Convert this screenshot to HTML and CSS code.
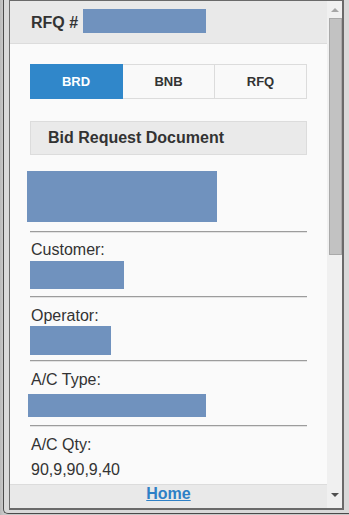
FILE: index.html
```html
<!DOCTYPE html>
<html>
<head>
    <meta charset="UTF-8">
    <title>RFQ</title>
    <link rel="stylesheet" href="styles.css">
</head>
<body>
    <div class="window">
        <div class="frame">
            <div class="page">
                <header>
                    <h2>RFQ #</h2>
                    <span class="hide hide-rfq"></span>
                </header>
                <div class="content">
                    <div class="tabs">
                        <button class="tab active">BRD</button>
                        <button class="tab">BNB</button>
                        <button class="tab">RFQ</button>
                    </div>
                    <h3 class="title">Bid Request Document</h3>
                    <div class="section doc">
                        <div class="hide hide-doc"></div>
                    </div>
                    <div class="section field">
                        <div class="label">Customer:</div>
                        <div class="hide hide-cust"></div>
                    </div>
                    <div class="section field">
                        <div class="label">Operator:</div>
                        <div class="hide hide-oper"></div>
                    </div>
                    <div class="section field">
                        <div class="label">A/C Type:</div>
                        <div class="hide hide-type"></div>
                    </div>
                    <div class="field">
                        <div class="label">A/C Qty:</div>
                        <div class="value">90,9,90,9,40</div>
                    </div>
                </div>
                <footer>
                    <a href="#">Home</a>
                </footer>
            </div>
            <div class="scrollbar">
                <div class="arrow up"></div>
                <div class="thumb"></div>
                <div class="track"></div>
                <div class="arrow down"></div>
            </div>
        </div>
    </div>
</body>
</html>
```

FILE: styles.css
```css
*{
    margin: 0;
    padding: 0;
    box-sizing: border-box;
}
html,body{
    height: 100%;
    overflow: hidden;
}
body{
    background: linear-gradient(to right, #b9b9b9 0, #c8c8c8 3px);
    font-family: "Liberation Sans", Arial, sans-serif;
    color: #333;
}
.window{
    margin-left: 3px;
    width: 346px;
    height: 514px;
    padding: 0 0 4px 5px;
    background-color: #d9d9d9;
    border-left: 1px solid #4a4a4a;
    border-bottom: 1px solid #4a4a4a;
    border-bottom-left-radius: 5px;
}
.frame{
    display: flex;
    width: 335px;
    height: 510px;
    border: 1px solid #6a6a6a;
    border-right-width: 2px;
    border-bottom-width: 2px;
}
.page{
    width: 317px;
    display: flex;
    flex-direction: column;
    background-color: #fafafa;
}
header{
    height: 43px;
    flex: none;
    display: flex;
    align-items: center;
    padding-left: 21px;
    background-color: #e9e9e9;
    border-bottom: 1px solid #dcdcdc;
}
header h2{
    font-size: 16px;
    line-height: 18px;
    margin-top: 1px;
}
.hide{
    background-color: #7092be;
}
.hide-rfq{
    display: block;
    width: 123px;
    height: 24px;
    margin: -2px 0 0 5px;
}
.content{
    flex: 1;
    overflow: hidden;
    padding: 20px 20px 0 20px;
}
.tabs{
    display: grid;
    grid-template-columns: 93px 92px 92px;
    height: 35px;
}
.tab{
    font-family: inherit;
    font-size: 13px;
    font-weight: bold;
    color: #333;
    background-color: #f9f9f9;
    border: 1px solid #dcdcdc;
    border-left: 0;
}
.tab.active{
    background-color: #3087ca;
    border-color: #3087ca;
    color: white;
}
.title{
    margin-top: 22px;
    height: 34px;
    padding: 7px 0 0 17px;
    font-size: 16px;
    line-height: 18px;
    background-color: #eaeaea;
    border: 1px solid #dcdcdc;
}
.section{
    border-bottom: 1px solid #9c9c9c;
    box-shadow: 0 1px 0 #e2e2e2;
}
.doc{
    padding: 16px 0 9px;
}
.hide-doc{
    width: 190px;
    height: 51px;
    margin-left: -3px;
}
.field{
    padding-top: 10px;
}
.label,.value{
    font-size: 16px;
    line-height: 18px;
    padding-left: 1px;
}
.section.field:nth-child(4){
    padding: 9px 0 7px 0;
}
.hide-cust{
    width: 94px;
    height: 28px;
    margin-top: 2px;
}
.section.field:nth-child(5){
    padding-bottom: 5px;
}
.hide-oper{
    width: 81px;
    height: 29px;
    margin-top: 1px;
}
.section.field:nth-child(6){
    padding-bottom: 8px;
}
.hide-type{
    width: 178px;
    height: 23px;
    margin: 5px 0 0 -2px;
}
.value{
    margin-top: 7px;
}
footer{
    height: 24px;
    flex: none;
    text-align: center;
    background-color: #e9e9e9;
    border-top: 1px solid #dcdcdc;
}
footer a{
    font-size: 16px;
    line-height: 18px;
    font-weight: bold;
    color: #2e80c6;
}
.scrollbar{
    width: 16px;
    display: flex;
    flex-direction: column;
    align-items: center;
    background-color: #f0f0f0;
}
.arrow{
    width: 0;
    height: 0;
    border-left: 4px solid transparent;
    border-right: 4px solid transparent;
}
.arrow.up{
    margin-top: 7px;
    border-bottom: 4px solid #a6a6a6;
}
.thumb{
    width: 13px;
    height: 237px;
    margin: 6px 0 0 1px;
    background-color: #c2c2c2;
    border: 1px solid #a9a9a9;
}
.track{
    flex: 1;
}
.arrow.down{
    margin-bottom: 11px;
    border-top: 4px solid #505050;
}
```
